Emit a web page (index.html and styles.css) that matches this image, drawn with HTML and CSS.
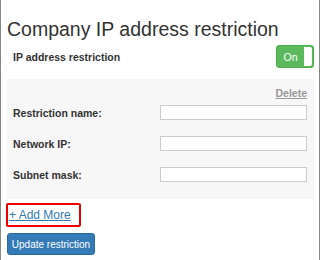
FILE: index.html
```html
<!DOCTYPE html>
<html lang="en">
<head>
    <meta charset="UTF-8">
    <title>Company IP address restriction</title>
    <link rel="stylesheet" href="styles.css">
</head>
<body>
    <div class="panel">
        <h2 class="title">Company IP address restriction</h2>
        <div class="setting-row">
            <span class="setting-label">IP address restriction</span>
            <span class="toggle"><span class="toggle-text">On</span><span class="knob"></span></span>
        </div>
        <div class="rule-box">
            <div class="delete-row"><a class="delete" href="#">Delete</a></div>
            <div class="field">
                <label>Restriction name:</label>
                <input type="text">
            </div>
            <div class="field">
                <label>Network IP:</label>
                <input type="text">
            </div>
            <div class="field">
                <label>Subnet mask:</label>
                <input type="text">
            </div>
        </div>
        <div class="add-row"><a class="add-more" href="#">+ Add More</a></div>
        <button class="update-btn">Update restriction</button>
    </div>
</body>
</html>
```

FILE: styles.css
```css
/* Page */
body {
    margin: 0;
    background: #fff;
    font-family: "Liberation Sans", Arial, sans-serif;
    color: #333;
}

.panel {
    width: 320px;
    height: 260px;
    border-left: 1px solid #888;
    border-right: 1px solid #888;
    padding: 0 5px 0 6px;
    box-sizing: border-box;
}

/* Title */
.title {
    margin: 0;
    padding-top: 17px;
    font-size: 19.5px;
    font-weight: normal;
    line-height: 24px;
    color: #333;
}

/* Top switch row */
.setting-row {
    display: flex;
    justify-content: space-between;
    align-items: center;
    padding: 4px 0 0 6px;
}

.setting-label {
    font-size: 10.5px;
    font-weight: bold;
}

.toggle {
    display: flex;
    align-items: center;
    width: 38px;
    height: 23px;
    background: #5cb85c;
    border: 1px solid #4cae4c;
    border-radius: 3px;
    box-sizing: border-box;
    overflow: hidden;
}

.toggle-text {
    flex: 1;
    text-align: center;
    color: #fff;
    font-size: 10.5px;
}

.knob {
    width: 8px;
    height: 19px;
    background: #fff;
    border-radius: 0 2px 2px 0;
    margin-right: 1px;
}

/* Restriction box */
.rule-box {
    margin-top: 11px;
    background: #f7f7f7;
    padding: 6px 7px 12px 6px;
}

.delete-row {
    text-align: right;
    line-height: 13px;
}

.delete {
    font-size: 10.5px;
    font-weight: bold;
    color: #999;
}

.field {
    display: flex;
    align-items: center;
    justify-content: space-between;
    height: 25px;
}

.field + .field {
    margin-top: 6px;
}

.field label {
    font-size: 10.5px;
    font-weight: bold;
}

.field input {
    width: 147px;
    height: 15px;
    box-sizing: border-box;
    border: 1px solid #ccc;
    background: #fff;
    padding: 0;
}

/* Add more link */
.add-row {
    margin-top: 4px;
    margin-left: -1px;
}

.add-more {
    display: inline-block;
    font-size: 12px;
    color: #337ab7;
    border: 2px solid #e00;
    border-radius: 2px;
    padding: 2px 8px 2px 1px;
    line-height: 16px;
}

/* Update button */
.update-btn {
    display: block;
    margin-top: 6px;
    background: #337ab7;
    border: 1px solid #2e6da4;
    color: #fff;
    font-family: "Liberation Sans", Arial, sans-serif;
    font-size: 10px;
    white-space: nowrap;
    border-radius: 3px;
    width: 88px;
    height: 22px;
    padding: 0;
}
```
